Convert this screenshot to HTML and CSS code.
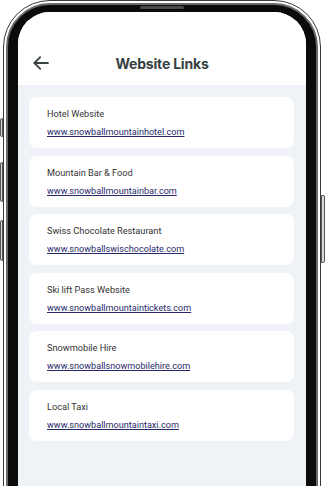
FILE: index.html
```html
<!DOCTYPE html>
<html lang="en">
<head>
<meta charset="utf-8">
<title>Website Links</title>
<link rel="stylesheet" href="styles.css">
</head>
<body>
<div class="stage">
  <div class="phone">
    <span class="btn btn-l1"></span>
    <span class="btn btn-l2"></span>
    <span class="btn btn-l3"></span>
    <span class="btn btn-r1"></span>
    <div class="bezel">
      <span class="speaker"></span>
      <div class="screen">
        <header class="header">
          <button class="back" aria-label="Back">
            <svg width="16" height="14" viewBox="0 0 16 14" fill="none" stroke="#39443f" stroke-width="1.8" stroke-linecap="round" stroke-linejoin="round">
              <path d="M15 7H1.5"/>
              <path d="M7.2 1.2L1.4 7l5.8 5.8"/>
            </svg>
          </button>
          <h1 class="title">Website Links</h1>
        </header>
        <main class="list">
          <div class="card">
            <div class="card-title">Hotel Website</div>
            <a class="card-link" href="#">www.snowballmountainhotel.com</a>
          </div>
          <div class="card">
            <div class="card-title">Mountain Bar &amp; Food</div>
            <a class="card-link" href="#">www.snowballmountainbar.com</a>
          </div>
          <div class="card">
            <div class="card-title">Swiss Chocolate Restaurant</div>
            <a class="card-link" href="#">www.snowballswischocolate.com</a>
          </div>
          <div class="card">
            <div class="card-title">Ski lift Pass Website</div>
            <a class="card-link" href="#">www.snowballmountaintickets.com</a>
          </div>
          <div class="card">
            <div class="card-title">Snowmobile Hire</div>
            <a class="card-link" href="#">www.snowballsnowmobilehire.com</a>
          </div>
          <div class="card">
            <div class="card-title">Local Taxi</div>
            <a class="card-link" href="#">www.snowballmountaintaxi.com</a>
          </div>
        </main>
      </div>
    </div>
  </div>
</div>
</body>
</html>
```
FILE: styles.css
```css
html, body {
  margin: 0;
  padding: 0;
  background: #ffffff;
  overflow: hidden;
  height: 486px;
}
body {
  font-family: Inter, "Noto Sans", sans-serif;
}
.stage {
  padding-left: 3px;
}
.phone {
  position: relative;
  box-sizing: border-box;
  width: 318px;
  height: 640px;
  border: 1px solid #3a3a3a;
  border-radius: 47px;
  padding: 2px;
  background: #ffffff;
}
.bezel {
  position: relative;
  box-sizing: border-box;
  height: 100%;
  background: #0b0b0b;
  border: 2px solid #6a6a6a;
  border-radius: 44px;
  padding: 7px 9px 0 10px;
}
.speaker {
  position: absolute;
  left: 132px;
  top: 1px;
  width: 44px;
  height: 3px;
  border-radius: 2px;
  background: #4a4a4a;
}
.btn {
  position: absolute;
  width: 3px;
  background: #d8d8d8;
  border: 1px solid #555;
  box-sizing: border-box;
}
.btn-l1 { left: -4px; top: 117px; height: 19px; border-radius: 2px 0 0 2px; }
.btn-l2 { left: -4px; top: 161px; height: 40px; border-radius: 2px 0 0 2px; }
.btn-l3 { left: -4px; top: 219px; height: 41px; border-radius: 2px 0 0 2px; }
.btn-r1 { right: -5px; top: 194px; height: 68px; width: 4px; border-radius: 0 2px 2px 0; }

.screen {
  width: 288px;
  height: 100%;
  background: #eff2f6;
  border-radius: 32px 32px 0 0;
  overflow: hidden;
}
.header {
  box-sizing: border-box;
  height: 73px;
  padding-top: 30px;
  background: #ffffff;
  display: flex;
  align-items: center;
  justify-content: center;
  position: relative;
}
.back {
  position: absolute;
  left: 15px;
  top: 44px;
  border: 0;
  padding: 0;
  background: none;
  display: flex;
}
.title {
  margin: 0;
  font-size: 14px;
  font-weight: 700;
  color: #36413f;
  letter-spacing: -0.2px;
}
.list {
  display: flex;
  flex-direction: column;
  gap: 7.5px;
  padding: 12px 12px 0 11px;
}
.card {
  box-sizing: border-box;
  height: 51px;
  background: #ffffff;
  border-radius: 8px;
  padding: 11px 18px 0;
  display: flex;
  flex-direction: column;
  gap: 6px;
  font-family: Roboto, "Liberation Sans", sans-serif;
}
.card-title {
  font-size: 9.2px;
  line-height: 12px;
  color: #333333;
}
.card-link {
  font-size: 9.1px;
  line-height: 12px;
  color: #26286a;
  text-decoration: underline;
  align-self: flex-start;
}
```
